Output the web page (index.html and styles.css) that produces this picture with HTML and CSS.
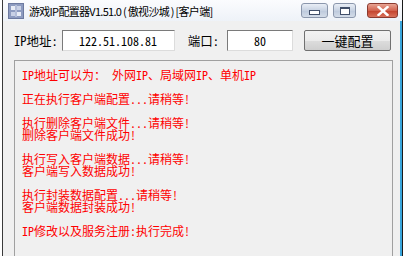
FILE: index.html
```html
<!DOCTYPE html>
<html>
<head>
<meta charset="utf-8">
<link rel="stylesheet" href="styles.css">
</head>
<body>
<div class="window">
  <div class="titlebar">
    <div class="app-icon">
      <svg width="16" height="16" viewBox="0 0 16 16">
        <rect x="0.5" y="0.5" width="15" height="15" fill="#8d9bc0" stroke="#6d7aa0"/>
        <rect x="3" y="3" width="4" height="4" fill="#e8ecf6"/>
        <rect x="9" y="3" width="4" height="4" fill="#c9d1e6"/>
        <rect x="3" y="9" width="4" height="4" fill="#c9d1e6"/>
        <rect x="9" y="9" width="4" height="4" fill="#e8ecf6"/>
        <rect x="7" y="2" width="2" height="12" fill="#b3bdd8"/>
      </svg>
    </div>
    <div class="title">游戏IP配置器V1.51.0 ( 傲视沙城 ) [客户端]</div>
    <div class="caption-buttons">
      <div class="cbtn min"><span class="min-bar"></span></div>
      <div class="cbtn max"><span class="max-box"></span></div>
      <div class="cbtn close">
        <svg width="12" height="10" viewBox="0 0 12 10">
          <path d="M1.5 1 L10.5 9 M10.5 1 L1.5 9" stroke="#fff" stroke-width="2.4" stroke-linecap="square"/>
        </svg>
      </div>
    </div>
  </div>
  <div class="client">
    <div class="toolbar">
      <span class="label">IP地址:</span>
      <div class="field ip">122.51.108.81</div>
      <span class="label port-label">端口:</span>
      <div class="field port">80</div>
      <div class="button">一键配置</div>
    </div>
    <div class="log">
      <p>IP地址可以为： 外网IP、局域网IP、单机IP</p>
      <p>正在执行客户端配置...请稍等!</p>
      <p>执行删除客户端文件...请稍等!<br>删除客户端文件成功!</p>
      <p>执行写入客户端数据...请稍等!<br>客户端写入数据成功!</p>
      <p>执行封装数据配置...请稍等!<br>客户端数据封装成功!</p>
      <p>IP修改以及服务注册:执行完成!</p>
    </div>
  </div>
</div>
</body>
</html>
```
FILE: styles.css
```css
html, body {
  margin: 0;
  padding: 0;
  background: #ffffff;
  overflow: hidden;
}
.window {
  margin-left: 2px;
  width: 399px;
  height: 256px;
  border-left: 1px solid #3a3a3a;
  border-right: 1px solid #1a1a1a;
  box-shadow: inset -2px 0 0 #3aa6dc;
  background: #f0f0f0;
  display: flex;
  flex-direction: column;
  font-family: "Noto Sans CJK SC", sans-serif;
}
.titlebar {
  height: 21px;
  display: flex;
  align-items: center;
  background: linear-gradient(#fbfcfe, #eef2f8);
  box-sizing: border-box;
  padding-left: 5px;
  padding-right: 4px;
}
.app-icon {
  width: 16px;
  height: 16px;
  display: flex;
}
.title {
  margin-left: 5px;
  font-size: 11px;
  color: #000;
  white-space: nowrap;
  flex: 1;
  letter-spacing: -0.7px;
}
.caption-buttons {
  display: flex;
  align-items: center;
}
.cbtn {
  height: 15px;
  border-radius: 3px;
  box-sizing: border-box;
  display: flex;
  align-items: center;
  justify-content: center;
}
.cbtn.min, .cbtn.max {
  border: 1px solid #8b97ac;
  background: linear-gradient(#e9eef6, #c7d2e2 50%, #bcc9dc 51%, #d4dde9);
}
.cbtn.min {
  width: 27px;
}
.cbtn.max {
  width: 23px;
  margin-left: 5px;
}
.min-bar {
  width: 9px;
  height: 3px;
  margin-top: 4px;
  background: #fff;
  border: 1px solid #42506a;
}
.max-box {
  width: 8px;
  height: 5px;
  border: 1px solid #42506a;
  border-top-width: 2px;
  background: #fff;
}
.cbtn.close {
  width: 31px;
  margin-left: 11px;
  border: 1px solid #8a3a30;
  background: linear-gradient(#e8a494, #d2634f 50%, #c2402b 51%, #d9725c);
}
.client {
  flex: 1;
  display: flex;
  flex-direction: column;
  padding: 0 11px 0 11px;
}
.toolbar {
  height: 39px;
  display: flex;
  align-items: center;
}
.label {
  font-family: "Noto Sans Mono CJK SC", "Noto Sans CJK SC", monospace;
  font-size: 12.5px;
  color: #000;
  width: 48px;
  white-space: nowrap;
}
.port-label {
  margin-left: 13px;
  width: 40px;
}
.field {
  height: 21px;
  box-sizing: border-box;
  background: #fff;
  border: 1px solid #7a7a7a;
  border-right-color: #dcdcdc;
  border-bottom-color: #dcdcdc;
  display: flex;
  align-items: center;
  justify-content: center;
  font-family: "Noto Sans Mono CJK SC", "Liberation Mono", monospace;
  font-size: 12px;
  color: #000;
}
.field.ip {
  width: 114px;
}
.field.port {
  width: 66px;
}
.button {
  margin-left: 11px;
  width: 88px;
  height: 21px;
  box-sizing: border-box;
  border: 1px solid #707070;
  border-radius: 2px;
  background: linear-gradient(#f2f2f2, #ebebeb 50%, #dddddd 51%, #cfcfcf);
  display: flex;
  align-items: center;
  justify-content: center;
  font-size: 13px;
  color: #000;
}
.log {
  flex: 1;
  margin-right: -2px;
  border: 1px solid #a0a0a0;
  border-bottom: none;
  padding: 8px 7px 0 7px;
  font-family: "Noto Sans Mono CJK SC", "Noto Sans CJK SC", monospace;
  font-size: 12px;
  line-height: 12px;
  color: #ff0000;
}
.log p {
  margin: 0 0 12px 0;
  white-space: nowrap;
}
```
